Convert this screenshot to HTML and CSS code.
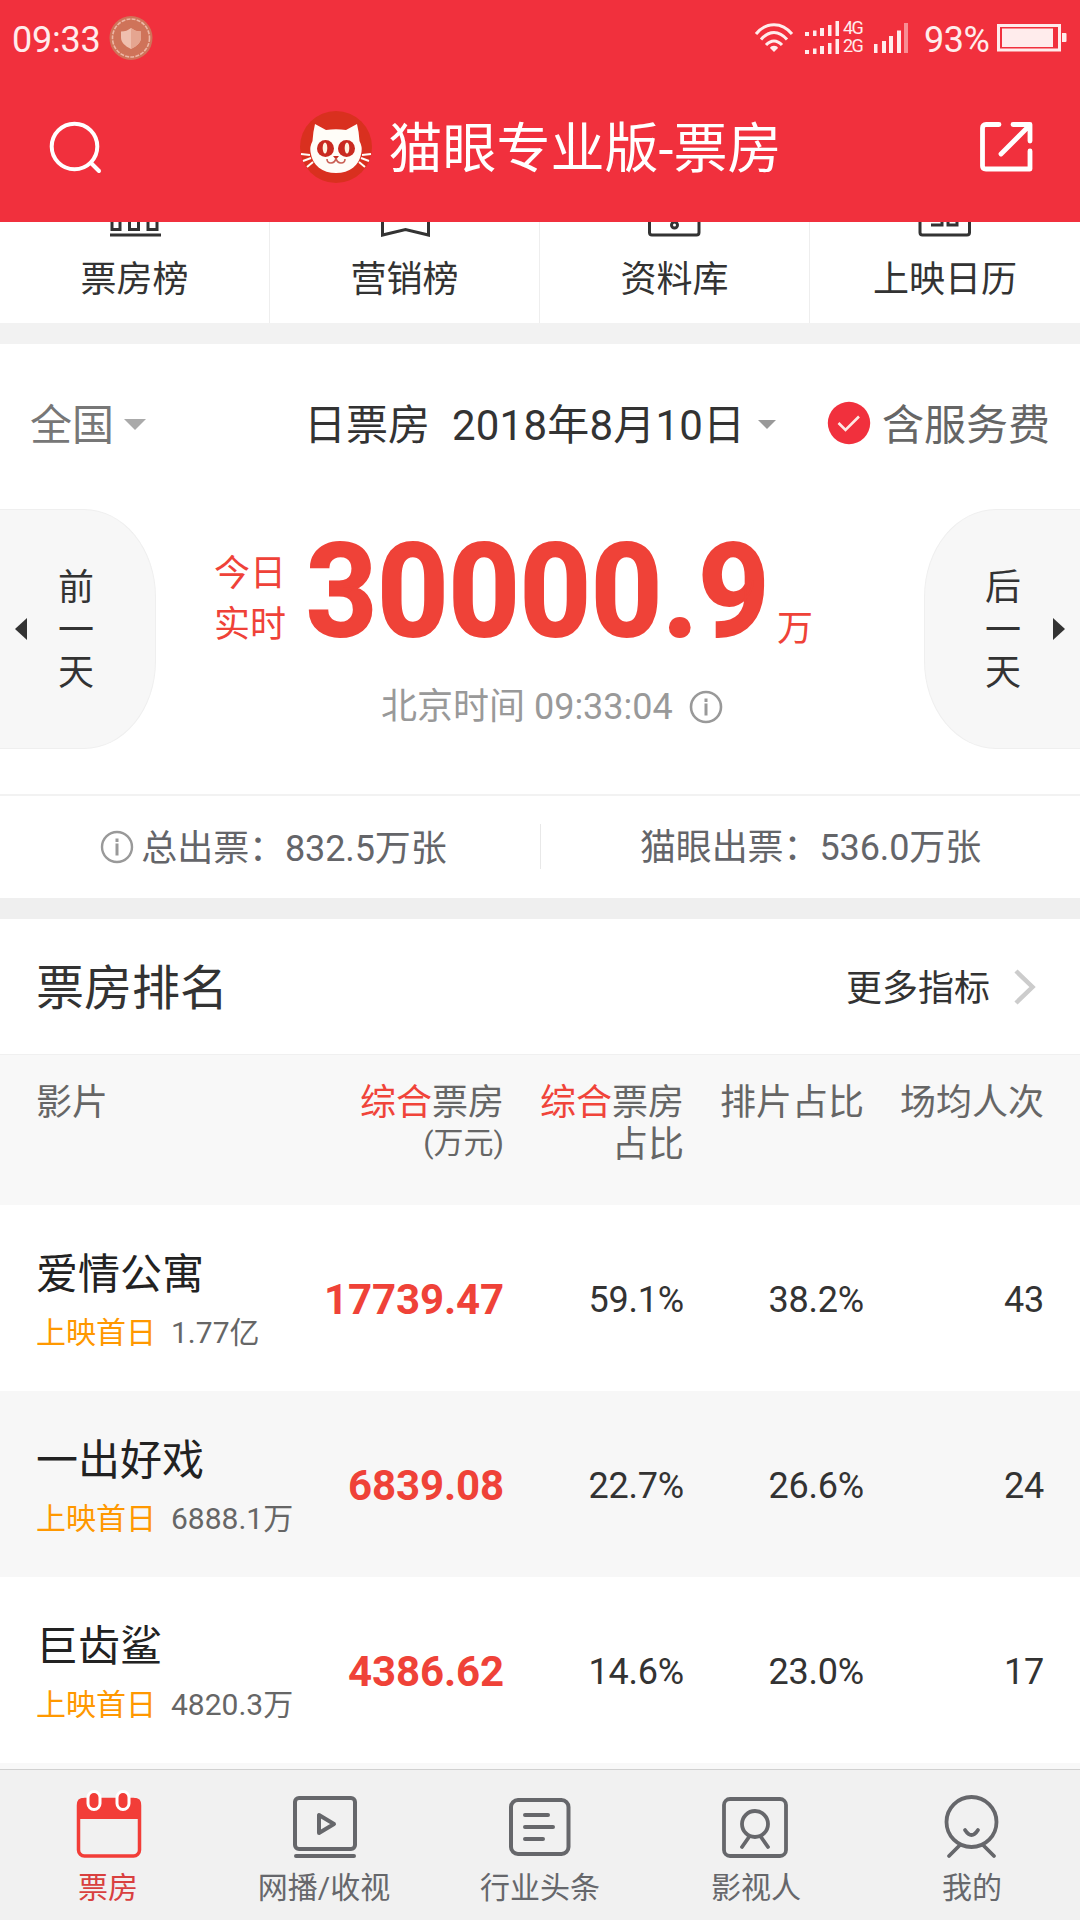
FILE: index.html
```html
<!DOCTYPE html>
<html lang="zh-CN">
<head>
<meta charset="utf-8">
<title>猫眼专业版-票房</title>
<link rel="stylesheet" href="styles.css">
</head>
<body>
<div class="app">
  <header class="top">
    <div class="status">
      <span class="clock">09:33</span>
      <svg class="badge" width="44" height="46" viewBox="0 0 44 46">
        <ellipse cx="22" cy="23" rx="21.500" ry="22" fill="#cf7359"/>
        <ellipse cx="22" cy="23" rx="18.500" ry="19" fill="none" stroke="#edb7a5" stroke-width="1.600" stroke-dasharray="4 1.200"/>
        <path d="M22 13c3 2.500 6 3.500 10 3.500v6c0 5-4 8.500-10 11.500-6-3-10-6.500-10-11.500v-6c4 0 7-1 10-3.500z" fill="#efbfae"/>
        <path d="M22 13v21c6-3 10-6.500 10-11.500v-6c-4 0-7-1-10-3.500z" fill="#e5a590"/>
      </svg>
      <svg class="wifi" width="40" height="32" viewBox="0 0 40 32" fill="none" stroke="#ffecec" stroke-width="3">
        <path d="M2 13C12 .5 28 .5 38 13M7 18.500C15 9 25 9 33 18.500M12 24c5-5.500 11-5.500 16 0"/>
        <path d="M20 31l-4-4c1-3 7-3 8 0z" fill="#ffecec" stroke="none"/>
      </svg>
      <svg class="dual" width="36" height="36" viewBox="0 0 36 36" fill="#ffecec">
        <path d="M1 12h4v4H1zM9 10.500h3.500V16H9zM16 8h4v8h-4zM24 5h3.500v11H24zM31.500 1H35v15h-3.500z"/>
        <path d="M1 30h4v4H1zM9 28.500h3.500V34H9zM16 26h4v8h-4zM24 23h3.500v11H24zM31.500 19H35v15h-3.500z"/>
      </svg>
      <div class="net"><span>4G</span><span>2G</span></div>
      <svg class="signal" width="36" height="32" viewBox="0 0 36 32" fill="#ffecec">
        <path d="M1 22h3.500v9H1zM9 19h4v12H9zM16 14h4v17h-4zM24 8.500h4V31h-4z"/>
        <path d="M31 1h4v30h-4z" opacity=".5"/>
      </svg>
      <span class="percent">93%</span>
      <svg class="battery" width="71" height="28" viewBox="0 0 71 28">
        <rect x="1.500" y="1.500" width="61" height="24.500" fill="none" stroke="#ffecec" stroke-width="3"/>
        <path d="M5 4.500h51v18.500H5zM65 9h3.500q1 0 1 1v7q0 1-1 1H65z" fill="#ffecec"/>
      </svg>
    </div>
    <div class="title-bar">
      <svg class="search" width="54" height="54" viewBox="0 0 54 54" fill="none" stroke="#fff" stroke-width="4" stroke-linecap="round">
        <ellipse cx="26.500" cy="26.500" rx="22.800" ry="22.800"/><path d="M43 43l8 8"/>
      </svg>
      <div class="brand">
        <svg width="74" height="74" viewBox="0 0 74 74">
          <circle cx="37" cy="37" r="36" fill="#d9301f"/>
          <path d="M16 14l11 6q10-1.500 20 0l11-6q2 8 2.500 17 3 6 2 11c-2 14-12 21-25.500 21S13.500 56 11.500 42q-1-5 2-11Q14 22 16 14z" fill="#fffdf8"/>
          <circle cx="26.500" cy="38.500" r="8.500" fill="#c92a20"/><circle cx="47.500" cy="38.500" r="8.500" fill="#c92a20"/>
          <ellipse cx="26" cy="38" rx="2.300" ry="5.500" fill="#fff3df"/><ellipse cx="48" cy="38" rx="2.300" ry="5.500" fill="#fff3df"/>
          <path d="M34 46h6l-3 3.500z" fill="#c92a20"/>
          <path d="M37 48q-1 5-5 5t-4-4M37 48q1 5 5 5t4-4" fill="none" stroke="#c96055" stroke-width="1.600"/>
          <path d="M2 44l9 1M4 51l8-3M8 57l6-5M72 44l-9 1M70 51l-8-3M66 57l-6-5" stroke="#fffdf8" stroke-width="2"/>
        </svg>
        <h1>猫眼专业版-票房</h1>
      </div>
      <svg class="share" width="54" height="52" viewBox="0 0 54 52" fill="none" stroke="#fff" stroke-width="4.800" stroke-linecap="round" stroke-linejoin="round">
        <path d="M20 3.500H7Q3.500 3.500 3.500 7v38q0 3 3.500 3h44V30"/><path d="M34 3.500h17V20M50 5L22 33"/>
      </svg>
    </div>
  </header>

  <nav class="shortcuts">
    <a><svg width="54" height="16" viewBox="0 0 54 16" fill="none" stroke="#333" stroke-width="3"><path d="M4 0v7.500h8V0M21.500 0v7.500h9V0M40 0v7.500h9V0M2 13h51"/></svg>票房榜</a>
    <a><svg width="54" height="16" viewBox="0 0 54 16" fill="none" stroke="#333" stroke-width="3"><path d="M4.500 0v13l23-5.500L50.500 13V0"/></svg>营销榜</a>
    <a><svg width="54" height="16" viewBox="0 0 54 16" fill="none" stroke="#333" stroke-width="3"><path d="M1.500 0v10.500q0 2.500 2.500 2.500h44.500q2.500 0 2.500-2.500V0"/><circle cx="26.500" cy="3" r="3"/></svg>资料库</a>
    <a><svg width="54" height="16" viewBox="0 0 54 16" fill="none" stroke="#333" stroke-width="3"><path d="M2 0v10.500q0 2.500 2.500 2.500h44.500q2.500 0 2.500-2.500V0M13 3h11V0M30 0v3h9V0"/></svg>上映日历</a>
  </nav>

  <section class="summary">
    <div class="filters">
      <span class="region">全国<i class="caret"></i></span>
      <span class="date"><span>日票房</span><span>2018年8月10日</span><i class="caret small"></i></span>
      <span class="fee"><svg width="44" height="44" viewBox="0 0 44 44"><circle cx="22" cy="22" r="21.200" fill="#f1303d"/><path d="M11.500 22l7 7L32 15.500" fill="none" stroke="#fde9e4" stroke-width="2.600"/></svg>含服务费</span>
    </div>
    <div class="daily">
      <div class="pager prev"><i class="arrow left"></i><span>前一天</span></div>
      <div class="total">
        <div class="amount">
          <span class="live">今日<br>实时</span>
          <span class="figure"><span>30000.9</span></span>
          <span class="unit">万</span>
        </div>
        <div class="time">北京时间 09:33:04<svg width="34" height="34" viewBox="0 0 34 34" fill="none" stroke="#999" stroke-width="2.600"><circle cx="17" cy="17" r="15"/><path d="M17 13.500V25.500M17 8.500v3.500" stroke-width="3"/></svg></div>
      </div>
      <div class="pager next"><span>后一天</span><i class="arrow right"></i></div>
    </div>
    <div class="tickets">
      <span class="ticket"><svg width="34" height="34" viewBox="0 0 34 34" fill="none" stroke="#999" stroke-width="2.400"><circle cx="17" cy="17" r="15"/><path d="M17 13.500V25.500M17 8.500v3.500" stroke-width="3"/></svg><span>总出票：832.5万张</span></span>
      <span class="ticket"><span>猫眼出票：536.0万张</span></span>
    </div>
  </section>

  <section class="ranking">
    <div class="ranking-title">
      <h2>票房排名</h2>
      <a><span>更多指标</span><svg width="22" height="36" viewBox="0 0 22 36" fill="none" stroke="#ccc" stroke-width="4.500"><path d="M2 2l16.500 16L2 34"/></svg></a>
    </div>
    <div class="grid head">
      <span>影片</span>
      <span class="num"><em>综合</em>票房<small>(万元)</small></span>
      <span class="num"><em>综合</em>票房<br>占比</span>
      <span class="num">排片占比</span>
      <span class="num">场均人次</span>
    </div>
    <div class="grid row">
      <div class="film"><h3>爱情公寓</h3><p><b>上映首日</b>1.77亿</p></div>
      <strong class="num">17739.47</strong><span class="num">59.1%</span><span class="num">38.2%</span><span class="num">43</span>
    </div>
    <div class="grid row">
      <div class="film"><h3>一出好戏</h3><p><b>上映首日</b>6888.1万</p></div>
      <strong class="num">6839.08</strong><span class="num">22.7%</span><span class="num">26.6%</span><span class="num">24</span>
    </div>
    <div class="grid row">
      <div class="film"><h3>巨齿鲨</h3><p><b>上映首日</b>4820.3万</p></div>
      <strong class="num">4386.62</strong><span class="num">14.6%</span><span class="num">23.0%</span><span class="num">17</span>
    </div>
  </section>

  <nav class="tabs">
    <a class="active">
      <svg width="70" height="70" viewBox="-1 2 70 70">
        <rect x="4.500" y="11.500" width="61" height="56.500" rx="6" fill="none" stroke="#f23d38" stroke-width="3.500"/>
        <path d="M3 31V16q0-6 6-6h52q6 0 6 6v15z" fill="#f23d38"/>
        <rect x="14" y="3.500" width="12" height="18" rx="6" fill="#f23d38" stroke="#fff" stroke-width="3"/>
        <rect x="43" y="3.500" width="12" height="18" rx="6" fill="#f23d38" stroke="#fff" stroke-width="3"/>
      </svg>票房</a>
    <a>
      <svg width="70" height="70" viewBox="-1 0 70 70" fill="none" stroke="#66676b" stroke-width="4" stroke-linecap="round" stroke-linejoin="round">
        <rect x="5" y="8" width="60" height="51" rx="4"/><path d="M6 66h58M29 25v18l15-9z"/>
      </svg>网播/收视</a>
    <a>
      <svg width="70" height="70" viewBox="0 0 70 70" fill="none" stroke="#66676b" stroke-width="4" stroke-linecap="round">
        <rect x="6" y="10" width="57.500" height="54" rx="7"/><path d="M20 25h23M20 37h28M20 49h18"/>
      </svg>行业头条</a>
    <a>
      <svg width="70" height="70" viewBox="0 0 70 70" fill="none" stroke="#66676b" stroke-width="3.800" stroke-linecap="round">
        <rect x="3" y="9" width="62" height="57" rx="6"/><circle cx="34" cy="34" r="13"/><path d="M28 47l-7 10M40 47l7 10"/>
      </svg>影视人</a>
    <a>
      <svg width="70" height="70" viewBox="0 0 70 70" fill="none" stroke="#66676b" stroke-width="3.800" stroke-linecap="round">
        <circle cx="34.500" cy="32" r="25"/><path d="M28 40q6.500 10 13 0M23 55L12 66M46 55l11 11"/>
      </svg>我的</a>
  </nav>
</div>
</body>
</html>
```

FILE: styles.css
```css
* { box-sizing: border-box; }
body {
  margin: 0;
  background: #f8f8f8;
  color: #333;
  font-family: Roboto, "Noto Sans CJK SC", sans-serif;
  font-size: 36px;
  line-height: 42px;
}
h1, h2, h3, p { margin: 0; font-weight: 400; }
em, i { font-style: normal; }
svg { display: block; flex: none; }
.app { width: 1080px; height: 1920px; display: flex; flex-direction: column; overflow: hidden; }

/* status bar and title */
.top { height: 222px; background: #f1303d; color: #fff; }
.status { display: flex; align-items: flex-start; height: 76px; padding: 15px 12px 0; color: #ffecec; }
.clock { margin-top: 4px; width: 97px; letter-spacing: -.2px; }
.wifi { margin: 6px 10px 0 601px; }
.dual { margin: 5px 3px 0 0; }
.net { width: 30px; margin-top: 4px; display: flex; flex-direction: column; font-size: 18px; line-height: 18px; letter-spacing: -1.5px; }
.signal { margin-top: 7px; }
.percent { margin: 4px 0 0 15px; width: 73px; letter-spacing: -.5px; }
.battery { margin-top: 9px; }
.title-bar { display: flex; align-items: center; justify-content: space-between; height: 142px; padding: 0 47px 0 48px; }
.brand { display: flex; align-items: center; gap: 16px; margin-right: 1px; }
h1 { padding-top: 6px; font-size: 54px; line-height: 64px; }

/* shortcuts */
.shortcuts { display: grid; grid-template-columns: repeat(4, 1fr); height: 101px; background: #fff; }
.shortcuts a { display: flex; flex-direction: column; align-items: center; gap: 21px; border-right: 1px solid #eee; }
.shortcuts a:last-child { border-right: 0; }

/* daily summary */
.summary { height: 596px; border-top: 21px solid #f2f2f2; border-bottom: 21px solid #efefef; background: #fff; }
.filters { display: flex; align-items: center; height: 165px; padding: 0 30px 2px; font-size: 42px; line-height: 50px; }
.region { display: flex; align-items: center; width: 274px; color: #777; }
.caret { border: 11px solid transparent; border-bottom: 0; border-top-color: #aaa; margin: 0 0 2px 10px; }
.caret.small { border-width: 9px 9px 0; border-top-color: #999; margin-left: 13px; }
.date { display: flex; align-items: center; width: 523px; }
.date span + span { margin-left: 22px; letter-spacing: .2px; }
.fee { display: flex; align-items: center; gap: 11px; color: #666; }
.fee svg { margin-bottom: 5px; }
.daily { display: flex; justify-content: space-between; height: 285px; }
.pager { display: flex; align-items: center; width: 156px; height: 240px; background: #f7f7f7; border: 1px solid #efefef; }
.pager span { width: 36px; padding-top: 4px; text-align: center; line-height: 42.500px; }
.prev { border-left: 0; border-radius: 0 72px 72px 0 / 0 88px 88px 0; padding-left: 15px; gap: 31px; }
.next { border-right: 0; border-radius: 72px 0 0 72px / 88px 0 0 88px; padding-left: 60px; gap: 32px; }
.arrow { border: 11px solid transparent; }
.arrow.left { border-left: 0; border-right: 12px solid #333; }
.arrow.right { border-right: 0; border-left: 12px solid #333; }
.total { display: flex; flex-direction: column; margin-right: 53px; }
.amount { display: flex; height: 170px; padding-top: 28px; color: #ef4238; }
.live { width: 92px; padding-top: 12px; line-height: 51px; }
.figure { width: 471px; padding-top: 2px; font-size: 130px; line-height: 106px; font-weight: 700; white-space: nowrap; }
.figure span { display: inline-block; transform: scaleX(.955); transform-origin: 0 50%; -webkit-text-stroke: 2px #ef4238; }
.unit { padding-top: 71px; }
.time { display: flex; align-items: center; gap: 16px; height: 56px; padding-left: 167px; color: #999; }
.tickets { display: grid; grid-template-columns: 1fr 1fr; height: 104px; border-top: 2px solid #f2f2f2; color: #646569; }
.ticket { display: flex; align-items: center; justify-content: center; gap: 7px; padding-left: 7px; letter-spacing: -.1px; }
.ticket > span { padding-top: 3px; }
.ticket + .ticket { padding-left: 0; border-left: 1px solid #e8e8e8; height: 45px; margin-top: 28px; }

/* ranking */
.ranking-title { display: flex; align-items: center; justify-content: space-between; height: 135px; padding: 0 44px 0 36px; background: #fff; }
h2 { padding-top: 4px; font-size: 48px; line-height: 56px; }
.ranking-title a { display: flex; align-items: center; gap: 24px; }
.ranking-title a span { padding-top: 4px; }
.grid { display: grid; grid-template-columns: 288px repeat(4, 144px); column-gap: 36px; padding: 0 36px; }
.num { text-align: right; white-space: nowrap; }
.head { height: 151px; padding-top: 27px; border-top: 1px solid #f0f0f0; background: #f8f8f8; color: #666; }
.head em { color: #f0443a; }
.head small { display: block; font-size: 30px; line-height: 38px; }
.row { height: 186px; padding-top: 4px; align-items: center; letter-spacing: -.2px; }
.row:nth-child(even) { background: #f7f7f7; }
.row:nth-child(odd) { background: #fff; }
.row strong { justify-self: end; color: #ef4238; font-size: 42px; font-weight: 700; letter-spacing: -.1px; }
.film { padding-top: 4px; color: #222; letter-spacing: 0; }
h3 { font-size: 42px; line-height: 60px; }
.film p { display: flex; gap: 15px; color: #666; font-size: 30px; line-height: 55px; }
.film b { color: #ff9800; font-weight: 400; }

/* bottom tabs */
.tabs { display: grid; grid-template-columns: repeat(5, 1fr); flex: none; height: 151px; margin-top: auto; border-top: 1px solid #d0d0d0; background: #f1f1f1; color: #66676b; font-size: 30px; }
.tabs a { display: flex; flex-direction: column; align-items: center; padding-top: 20px; gap: 7px; }
.tabs .active { color: #d9403f; }
```
